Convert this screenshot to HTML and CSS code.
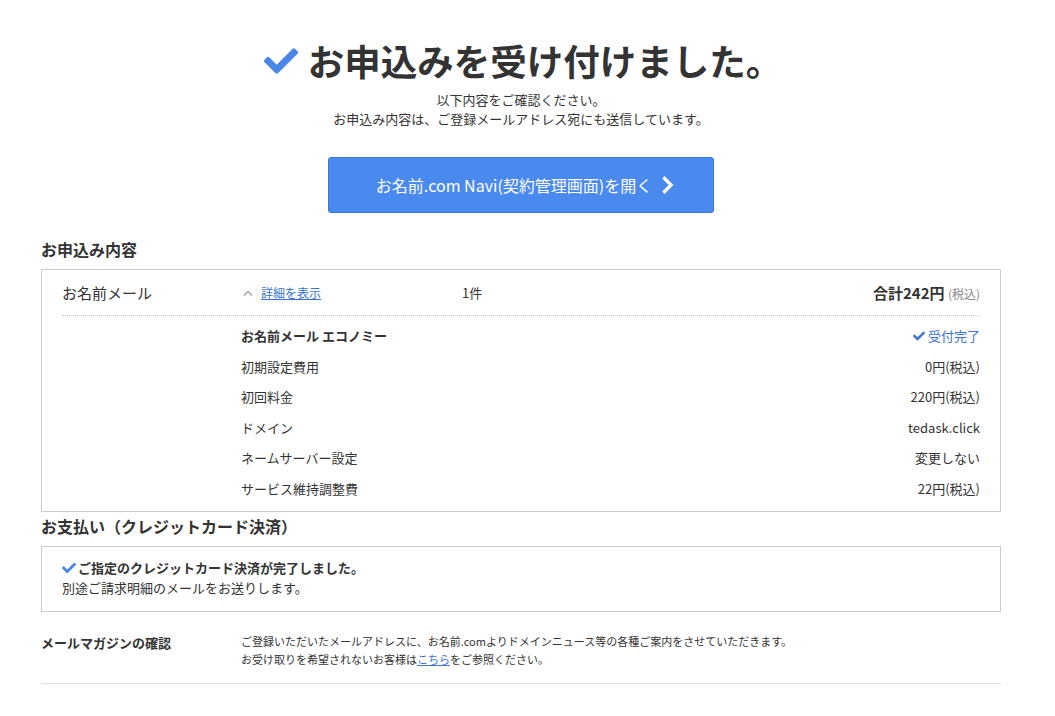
FILE: index.html
```html
<!DOCTYPE html>
<html lang="ja">
<head>
    <meta charset="UTF-8">
    <title>お申込み完了</title>
    <link rel="stylesheet" href="styles.css">
</head>
<body>
    <div class="container">
        <header class="complete-head">
            <h1>
                <svg class="check-big" viewBox="0 0 512 512" width="34" height="34"><path d="M173.9 439.4l-166.4-166.4c-10-10-10-26.2 0-36.2l36.2-36.2c10-10 26.2-10 36.2 0L192 312.7 432.1 72.6c10-10 26.2-10 36.2 0l36.2 36.2c10 10 10 26.2 0 36.2l-294.4 294.4c-10 10-26.2 10-36.2 0z"/></svg>
                お申込みを受け付けました。
            </h1>
            <p class="lead">以下内容をご確認ください。<br>お申込み内容は、ご登録メールアドレス宛にも送信しています。</p>
            <a class="navi-btn" href="#">お名前.com Navi(契約管理画面)を開く
                <svg viewBox="0 0 14 22" width="14" height="20"><path d="M3 2.5l8.5 8.5-8.5 8.5" fill="none" stroke="#fff" stroke-width="3.6"/></svg>
            </a>
        </header>

        <h2 class="section-title">お申込み内容</h2>
        <div class="box order-box">
            <div class="order-row">
                <div class="order-name">お名前メール</div>
                <div class="order-toggle">
                    <svg viewBox="0 0 10 6" width="10" height="6"><path d="M1 5.5L5 1.5 9 5.5" fill="none" stroke="#999" stroke-width="1.2"/></svg>
                    <a href="#">詳細を表示</a>
                </div>
                <div class="order-count">1件</div>
                <div class="order-total"><strong>合計242円</strong> <span class="tax">(税込)</span></div>
            </div>
            <ul class="detail-list">
                <li><b>お名前メール エコノミー</b><span class="done"><svg viewBox="0 0 512 512" width="12" height="12"><path d="M173.9 439.4l-166.4-166.4c-10-10-10-26.2 0-36.2l36.2-36.2c10-10 26.2-10 36.2 0L192 312.7 432.1 72.6c10-10 26.2-10 36.2 0l36.2 36.2c10 10 10 26.2 0 36.2l-294.4 294.4c-10 10-26.2 10-36.2 0z"/></svg> 受付完了</span></li>
                <li><span>初期設定費用</span><span>0円(税込)</span></li>
                <li><span>初回料金</span><span>220円(税込)</span></li>
                <li><span>ドメイン</span><span>tedask.click</span></li>
                <li><span>ネームサーバー設定</span><span>変更しない</span></li>
                <li><span>サービス維持調整費</span><span>22円(税込)</span></li>
            </ul>
        </div>

        <h2 class="section-title pay-title">お支払い（クレジットカード決済）</h2>
        <div class="box pay-box">
            <p class="pay-done"><svg viewBox="0 0 512 512" width="14" height="14"><path d="M173.9 439.4l-166.4-166.4c-10-10-10-26.2 0-36.2l36.2-36.2c10-10 26.2-10 36.2 0L192 312.7 432.1 72.6c10-10 26.2-10 36.2 0l36.2 36.2c10 10 10 26.2 0 36.2l-294.4 294.4c-10 10-26.2 10-36.2 0z"/></svg><b>ご指定のクレジットカード決済が完了しました。</b></p>
            <p>別途ご請求明細のメールをお送りします。</p>
        </div>

        <div class="magazine">
            <div class="magazine-label">メールマガジンの確認</div>
            <p class="magazine-text">ご登録いただいたメールアドレスに、お名前.comよりドメインニュース等の各種ご案内をさせていただきます。<br>お受け取りを希望されないお客様は<a href="#">こちら</a>をご参照ください。</p>
        </div>
    </div>
</body>
</html>
```

FILE: styles.css
```css
body {
    margin: 0;
    font-family: "Noto Sans CJK JP", "Noto Sans", sans-serif;
    color: #333;
    background-color: #fff;
}
.container {
    width: 960px;
    margin-left: 41px;
    padding-top: 36px;
}
.complete-head {
    text-align: center;
}
.complete-head h1 {
    margin: 0;
    font-size: 36.5px;
    line-height: 49px;
    font-weight: bold;
    color: #333;
    display: flex;
    justify-content: center;
    align-items: center;
    gap: 10px;
    padding-left: 4px;
}
.check-big {
    fill: #4a86e8;
}
.lead {
    margin: 5px 0 0;
    font-size: 13px;
    line-height: 19px;
}
.navi-btn {
    display: flex;
    justify-content: center;
    align-items: center;
    gap: 8px;
    width: 386px;
    height: 56px;
    margin: 29px auto 0;
    padding-left: 8px;
    box-sizing: border-box;
    border: 1px solid #3b77d8;
    border-radius: 3px;
    background-color: #4a89ee;
    color: #fff;
    font-size: 16px;
    text-decoration: none;
}
.section-title {
    margin: 24px 0 8px;
    font-size: 16px;
    line-height: 24px;
    font-weight: bold;
}
.pay-title {
    margin-top: 2px;
}
.box {
    border: 1px solid #ccc;
    padding: 0 20px;
}
.order-row {
    display: flex;
    align-items: center;
    height: 46px;
    border-bottom: 1px dotted #ccc;
    box-sizing: border-box;
}
.order-name {
    width: 179px;
    font-size: 15px;
}
.order-toggle {
    width: 221px;
    display: flex;
    align-items: center;
    gap: 8px;
    padding-left: 2px;
    box-sizing: border-box;
    font-size: 12px;
}
.order-toggle a {
    color: #3a73d6;
}
.order-count {
    font-size: 13px;
}
.order-total {
    margin-left: auto;
    font-size: 15px;
}
.tax {
    font-size: 12px;
    color: #888;
}
.detail-list {
    list-style: none;
    margin: 0 0 0 179px;
    padding: 5px 0 7px;
}
.detail-list li {
    display: flex;
    justify-content: space-between;
    height: 30.5px;
    line-height: 30.5px;
    font-size: 13px;
}
.done {
    color: #3a73d6;
}
.done svg {
    fill: #3a73d6;
    vertical-align: -1px;
}
.pay-box {
    padding: 11px 20px 13px;
}
.pay-box p {
    margin: 0;
    font-size: 13px;
    line-height: 20px;
}
.pay-done svg {
    fill: #4a86e8;
    vertical-align: -2px;
    margin-right: 2px;
}
.magazine {
    display: flex;
    margin-top: 20px;
    padding-bottom: 15px;
    border-bottom: 1px solid #ddd;
}
.magazine-label {
    width: 200px;
    padding-top: 2px;
    font-size: 13px;
    line-height: 18px;
    font-weight: bold;
}
.magazine-text {
    margin: 0;
    font-size: 11px;
    line-height: 18px;
}
.magazine-text a {
    color: #3a73d6;
}
```
